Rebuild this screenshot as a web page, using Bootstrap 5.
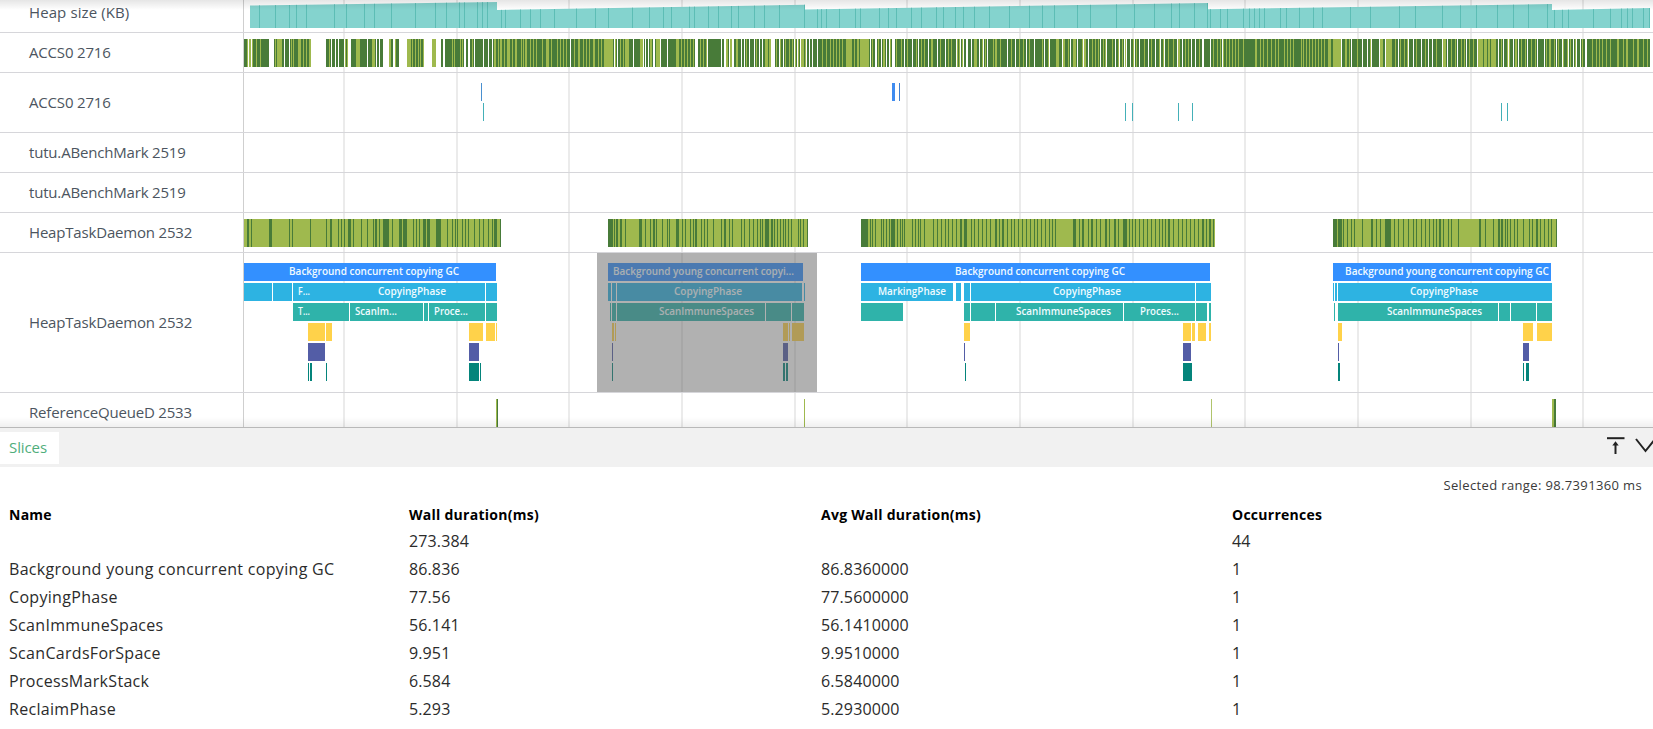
<!DOCTYPE html>
<html lang="en">
<head>
<meta charset="utf-8">
<meta name="viewport" content="width=device-width, initial-scale=1">
<title>Trace viewer</title>
<link href="https://cdn.jsdelivr.net/npm/bootstrap@5.3.0/dist/css/bootstrap.min.css" rel="stylesheet">
<style>
  body { font-family: "Open Sans", "Noto Sans", sans-serif; color: #2b2b2b; overflow: hidden; height: 729px; }
  .trace { height: 427px; }
  .trace::before, .trace::after { content: ""; position: absolute; left: 0; right: 0; height: 10px; pointer-events: none; }
  .trace::before { top: 0; background: linear-gradient(rgba(0,0,0,.1), rgba(0,0,0,0)); }
  .trace::after { bottom: 0; background: linear-gradient(rgba(0,0,0,0), rgba(0,0,0,.06)); }
  .track { border-bottom: 1px solid #d6d6da; height: 40px; flex: none; }
  .track-cut { height: 33px; }
  .track-mid { height: 60px; }
  .track-tall { height: 140px; }
  .track-name { width: 244px; padding-left: 29px; border-right: 1px solid #cfcfcf; color: #4c5560; font-size: 15px; letter-spacing: -.18px; flex: none; }
  .track-cut .track-name { padding-bottom: 7px; letter-spacing: .1px; }
  .lane { width: 1409px; display: block; height: 100%; flex: none; }
  .lane text { font-size: 11px; font-weight: 600; fill: #f1fbff; }
  .picked { fill: #636363; fill-opacity: .5; }
  .details { border-top: 1px solid #b9b9b9; height: 302px; }
  .tabs-bar { background: #f1f1f1; height: 39px; padding-top: 4px; }
  .tab-slices { width: 59px; height: 32px; color: #4fae7b; font-size: 15px; letter-spacing: -.1px; padding: 0 0 2px 9px; background: #fff; }
  .range-text { font-size: 13px; letter-spacing: .36px; height: 37px; padding: 1px 11px 0 0; color: #3a3a3a; }
  .sheet { font-size: 16px; table-layout: fixed; width: 1645px; margin-left: 9px; }
  .sheet td, .sheet th { padding: 0; height: 28px; line-height: 28px; letter-spacing: .12px; }
  .sheet td:first-child { letter-spacing: .31px; }
  .sheet th { font-size: 14px; color: #000; height: 23px; line-height: 21px; padding-bottom: 2px; font-weight: 700; letter-spacing: .26px; }
</style>
</head>
<body class="bg-white">
<main class="trace position-relative overflow-hidden d-flex flex-column" id="trace"></main>
<section class="details">
  <div class="tabs-bar d-flex justify-content-between">
    <div class="tab-slices d-flex align-items-center">Slices</div>
    <svg width="50" height="30" viewBox="0 0 50 30" fill="none" stroke="#222">
      <path d="M4 6.200h17.500" stroke-width="2"/>
      <path d="M12.500 22V11" stroke-width="2"/>
      <path d="M9.300 13.500L12.500 9.300l3.200 4.200z" fill="#222" stroke="none"/>
      <path d="M33 7l9.500 12L52 7" stroke-width="2"/>
    </svg>
  </div>
  <div class="range-text d-flex align-items-center justify-content-end"><span>Selected range: 98.7391360 ms</span></div>
  <table class="sheet">
    <colgroup><col style="width:400px"><col style="width:412px"><col style="width:411px"><col></colgroup>
    <thead><tr><th>Name</th><th>Wall duration(ms)</th><th>Avg Wall duration(ms)</th><th>Occurrences</th></tr></thead>
    <tbody>
      <tr><td></td><td>273.384</td><td></td><td>44</td></tr>
      <tr><td>Background young concurrent copying GC</td><td>86.836</td><td>86.8360000</td><td>1</td></tr>
      <tr><td>CopyingPhase</td><td>77.56</td><td>77.5600000</td><td>1</td></tr>
      <tr><td>ScanImmuneSpaces</td><td>56.141</td><td>56.1410000</td><td>1</td></tr>
      <tr><td>ScanCardsForSpace</td><td>9.951</td><td>9.9510000</td><td>1</td></tr>
      <tr><td>ProcessMarkStack</td><td>6.584</td><td>6.5840000</td><td>1</td></tr>
      <tr><td>ReclaimPhase</td><td>5.293</td><td>5.2930000</td><td>1</td></tr>
    </tbody>
  </table>
</section>
<script src="https://cdn.jsdelivr.net/npm/bootstrap@5.3.0/dist/js/bootstrap.bundle.min.js"></script>
<script>
const RUN = '#487b39', READY = '#9fb94e';
const rect = (x, y, w, h, fill) => `<rect x="${x}" y="${y}" width="${w}" height="${h}" fill="${fill}"/>`;
const grid = h => [343,456,568,681,794,906,1019,1132,1244,1357,1470,1582].map(x => rect(x, 0, 2, h, 'rgba(0,0,0,.08)')).join('');
// Time is sampled at three ticks per pixel; each chunk holds "start-end" spans from its own origin.
const spans = (origin, list, y, fill) => list.trim().split(/\s+/).map(s => {
  const [a, b] = s.split('-').map(Number);
  return rect((origin + a / 3).toFixed(2), y, (((b || a + 3) - a) / 3).toFixed(2), 28, fill);
}).join('');

// heap counter
const heapTicks = {
  0: '778 826 868 889 919 1003 1040 1093 1123 1175 1246 1306 1340 1378 1393 1432 1447 1462 1504 1515',
  520: '0 30 60 102 168 225 264 336 387 429 453 507 522 564 594 633 654 702 732 777 852 891 903 918 957 1005 1020 1077 1104 1128',
  900: '33 63 108 129 165 189 222 267 327 387 426 462 531 570 648 702 762 813 837 882 921 930 960 981 1029 1047 1062 1077 1092',
  1280: '0 18 57 99 126 210 270 357 405 486 540 588 651 699 744 801 822 846 864 939 990 1023 1041 1056 1089 1107'
};
let ticks = '';
for (const o in heapTicks) heapTicks[o].split(' ').forEach(t => { ticks += rect(Math.floor(+o + t / 3), 0, 1, 28, '#5dbdb5'); });
const profile = 'M250 5.500L497 2V10L805 4.700V9.500L1208 3V9.300L1552 4V10L1650 8V28H250z';
const heap = `<clipPath id="heapShape"><path d="${profile}"/></clipPath>
  <path d="${profile}" fill="#80d2cc" fill-opacity=".97" shape-rendering="auto"/><g clip-path="url(#heapShape)">${ticks}</g>`;

// thread state of ACCS0
const states = [
  { o: 0,
    idle: '744-747 752-756 807-822 852-855 867-870 933-978 993-996 1005-1008 1014-1017 1032-1034 1044-1053 1101-1103 1129-1131 1137-1140 1149-1167 1179-1185 1197-1221 1272-1296 1308-1323 1329-1335 1392-1398 1404-1411 1422-1425 1449-1452 1464-1467 1475-1479',
    ready: '741-744 747-752 756-759 768-771 780-783 788-790 794-796 800-802 826-828 831-846 873-875 880-882 887-889 895-903 910-912 918-921 926-933 987-991 1035-1038 1041-1044 1058-1060 1067-1080 1086-1087 1116-1124 1127-1129 1167-1173 1185-1188 1221-1233 1236-1240 1245-1247 1255-1257 1261-1263 1269-1272 1296-1308 1356-1358 1363-1365 1380-1382 1387-1389 1416-1418 1483-1488 1493-1496 1501-1505 1511-1514 1520-1530 1536-1539 1545-1551 1556-1558' },
  { o: 520,
    idle: '150-153 282-285 291-293 339-342 357-358 369-371 375-378 384-386 399-405 420-422 441-444 525-534 561-563 603-606 612-618 627-630 636-642 663-666 672-675 687-690 702-704 717-719 726-728 753-765 777-780 789-792 822-824 831-833 840-842 858-861 867-870 876-878 891-893 1050-1053 1065-1070 1083-1086 1098-1101 1107-1109 1117-1125',
    ready: '3-6 9-12 15-21 30-33 39-42 48-51 66-69 78-86 93-96 111-114 120-122 129-132 138-141 162-165 174-180 189-192 198-201 207-210 219-225 234-237 243-246 252-280 285-288 300-302 309-311 315-327 360-369 390-396 408-420 468-477 483-485 492-494 501-503 510-512 519-521 540-543 549-552 558-561 618-624 630-636 648-654 678-681 708-711 735-744 747-753 768-771 780-783 796-799 806-810 815-818 825-828 834-837 842-853 856-858 906-909 918-921 930-933 939-942 948-950 957-960 966-969 978-996 1002-1004 1011-1016 1020-1047 1056-1058 1074-1077 1089-1095 1111-1114 1128-1131' },
  { o: 900,
    idle: '12-15 37-40 55-57 84-86 111-114 135-137 168-170 180-183 189-191 198-204 213-215 237-240 249-251 262-265 321-324 345-348 378-381 402-405 432-435 447-450 486-488 510-513 531-534 549-552 564-567 600-603 618-621 645-647 657-659 673-675 678-681 690-693 702-705 717-720 744-747 765-768 780-783 792-795 831-833 846-849 873-876 885-888 906-912 930-933 966-969',
    ready: '3-5 22-23 49-52 63-65 72-75 93-99 120-123 144-146 153-155 171-174 177-179 186-188 222-231 246-248 255-258 279-281 285-291 300-303 333-336 357-359 369-371 387-390 426-430 444-446 468-477 489-495 504-506 519-528 546-549 552-558 576-579 585-588 594-596 609-612 615-617 636-639 654-657 666-669 675-677 699-701 708-711 732-735 753-756 777-779 789-792 804-807 819-822 834-840 855-857 864-867 897-900 939-942 951-954 960-963 969-972 978-981 987-990 996-999 1005-1007 1014-1017 1028-1031 1040-1042 1065-1071 1080-1082 1089-1092 1101-1104 1113-1116 1125-1128 1134-1137' },
  { o: 1280,
    idle: '183-186 213-216 246-249 261-264 273-275 297-300 315-317 354-357 384-388 399-402 423-426 444-447 456-459 486-488 501-504 531-534 558-561 591-594 654-657 669-672 684-687 699-702 714-717 741-743 771-774 792-795 828-831 846-848 864-867 879-882 888-891 900-903 915-921',
    ready: '12-15 21-24 30-33 39-41 63-66 69-71 78-81 87-90 96-99 105-109 114-117 123-126 132-135 144-153 159-182 195-200 207-210 231-233 270-272 284-286 300-309 318-336 345-348 360-363 372-375 381-384 408-410 435-437 468-471 489-498 513-517 525-528 543-546 552-554 567-571 579-582 594-609 612-620 624-630 633-648 663-666 681-684 687-690 705-711 723-726 735-738 753-756 765-768 798-801 807-813 822-825 834-837 849-853 861-864 870-873 885-887 906-909 936-939 948-951 957-960 966-969 978-981 990-993 1011-1017 1029-1031 1038-1044 1059-1062 1071-1076 1089-1092 1101-1104' }
];
const accs = rect(244, 6, 1406, 28, RUN) + states.map(s => spans(s.o, s.idle, 6, '#fff') + spans(s.o, s.ready, 6, READY)).join('');

// thread state of HeapTaskDaemon
const daemon = rect(244, 6, 257, 28, READY) + rect(608, 6, 200, 28, READY) + rect(860.5, 6, 354.5, 28, READY) + rect(1333, 6, 224, 28, READY) +
  spans(0, '741-747 752-755 761-763 770-772 779-781 788-790 797-799 807-816 867-869 876-879 930-933 978-981 990-996 1014-1016 1023-1025 1032-1034 1044-1053 1059-1061 1083-1085 1101-1104 1119-1121 1125-1131 1137-1139 1149-1167 1176-1179 1197-1206 1209-1221 1239-1241 1248-1250 1257-1259 1269-1278 1281-1290 1308-1323 1341-1344 1356-1358 1365-1367 1371-1373 1386-1388 1395-1397 1404-1406 1422-1425 1437-1439 1449-1451 1464-1467 1476-1478 1482-1491 1500-1503', 6, RUN) +
  spans(560, '144-159 162-165 168-174 180-186 195-198 237-246 255-258 270-273 279-285 288-291 306-309 321-323 327-329 348-357 366-368 375-378 390-393 399-402 405-411 423-426 432-434 441-443 459-462 483-485 491-498 507-510 516-518 543-546 552-554 567-569 579-582 591-593 600-602 606-608 615-627 633-639 642-644 651-654 660-662 669-671 675-677 684-687 693-695 714-717 720-723 729-731 741-744', 6, RUN) +
  spans(840, '62-84 90-92 96-98 105-107 123-125 129-131 138-140 147-149 153-165 171-173 180-183 186-188 192-194 216-218 225-227 234-236 240-242 252-254 279-281 291-293 303-305 315-317 324-326 336-338 348-350 360-366 372-381 393-395 402-404 414-417 426-428 438-440 450-453 465-471 477-479 486-492 501-503 513-515 522-524 534-536 546-548 558-560 570-572 582-584 591-593 603-605 615-617 627-629 636-638 645-648 699-708 717-719 726-732 744-747 753-759 768-770 780-782 795-801 807-809 822-828 834-837 849-861 867-869 876-878 885-887 897-899 909-911 921-923 933-935 945-948 957-959 966-968 975-977 984-990 999-1001 1014-1016 1026-1029 1038-1040 1050-1052 1062-1065 1074-1076 1086-1092 1098-1100 1107-1113 1119-1121', 6, RUN) +
  spans(1240, '279-291 294-306 309-311 321-323 333-335 342-344 366-369 393-399 408-411 420-422 435-453 462-464 474-477 489-491 504-507 519-521 528-530 543-545 555-557 567-569 579-581 588-590 597-603 609-611 624-626 633-636 654-657 717-723 735-738 759-762 774-780 783-789 795-797 801-803 810-812 822-824 831-833 849-851 867-869 876-878 888-894 900-902 912-914 924-926 933-936 948-951', 6, RUN);

// nested slices: [start, end] pairs for each depth
const depths = ['#3390ff', '#2db3e2', '#2fb3aa', '#ffd24a', '#535da6', '#04847b'];
const bars = [
  [[244,496],[608,803],[861,1210],[1333,1551]],
  [[244,272],[273,292],[293,485],[486,497],[608,611],[612,616],[617,802],[804,805],[861,953],[956,961],[964,970],[971,1195],[1196,1211],[1333,1334],[1335,1337],[1338,1552]],
  [[293,349],[350,423],[424,428],[429,485],[486,497],[610,611],[612,616],[617,765],[766,791],[792,804],[861,903],[964,970],[971,995],[996,1123],[1124,1195],[1196,1207],[1209,1211],[1334,1335],[1338,1498],[1499,1510],[1511,1536],[1537,1552]],
  [[308,325],[326,332],[469,483],[486,495],[496,497],[612,614],[615,616],[783,788],[789,790],[792,804],[964,970],[1183,1191],[1192,1195],[1198,1206],[1209,1211],[1338,1342],[1523,1533],[1537,1552]],
  [[308,325],[469,479],[612,613],[783,788],[964,965],[1183,1191],[1338,1339],[1523,1529]],
  [[308,309],[310,312],[326,327],[469,479],[480,481],[612,613],[783,785],[786,788],[965,966],[1183,1192],[1338,1340],[1523,1524],[1526,1529]]
];
const names = [
  [0,289,170,'Background concurrent copying GC'],[0,613,181,'Background young concurrent copyi...'],[0,955,170,'Background concurrent copying GC'],[0,1345,204,'Background young concurrent copying GC'],
  [1,298,12,'F...'],[1,378,68,'CopyingPhase'],[1,674,68,'CopyingPhase'],[1,878,68,'MarkingPhase'],[1,1053,68,'CopyingPhase'],[1,1410,68,'CopyingPhase'],
  [2,298,12,'T...'],[2,355,42,'ScanIm...'],[2,434,34,'Proce...'],[2,659,95,'ScanImmuneSpaces'],[2,1016,95,'ScanImmuneSpaces'],[2,1140,39,'Proces...'],[2,1387,95,'ScanImmuneSpaces']
];
const slices = bars.map((row, d) => row.map(([a, b]) => rect(a, 10 + d * 20, b - a, 18, depths[d])).join('')).join('') +
  names.map(([d, x, w, t]) => `<text x="${x}" y="${22 + d * 20}" textLength="${w}" lengthAdjust="spacingAndGlyphs">${t}</text>`).join('') +
  '<rect class="picked" x="597" y="0" width="220" height="140"/>';

const calls = rect(481,10,1,18,'#4a90d0') + rect(892,10,3,18,'#3f8cf0') + rect(899,10,1,18,'#3f7fd0') +
  [483,1125,1132,1178,1192,1501,1507].map(x => rect(x, 30, 1, 18, '#44b0b8')).join('');
const queue = rect(496,6,1,40,READY) + rect(497,6,1,40,RUN) + rect(804,6,1,40,READY) + rect(1211,6,1,40,'#b0c46c') + rect(1552,6,2,40,READY) + rect(1554,6,2,40,RUN);

const tracks = [
  ['Heap size (KB)', 'track-cut', heap, 33], ['ACCS0 2716', '', accs, 40], ['ACCS0 2716', 'track-mid', calls, 60],
  ['tutu.ABenchMark 2519', '', '', 40], ['tutu.ABenchMark 2519', '', '', 40], ['HeapTaskDaemon 2532', '', daemon, 40],
  ['HeapTaskDaemon 2532', 'track-tall', slices, 140], ['ReferenceQueueD 2533', '', queue, 40]
];
document.getElementById('trace').innerHTML = tracks.map(([name, cls, art, h]) =>
  `<div class="track d-flex ${cls}"><div class="track-name d-flex align-items-center">${name}</div>
    <svg class="lane" viewBox="244 0 1409 ${h - 1}" preserveAspectRatio="xMinYMin meet" shape-rendering="crispEdges">${grid(h)}${art}</svg></div>`
).join('');
</script>
</body>
</html>
